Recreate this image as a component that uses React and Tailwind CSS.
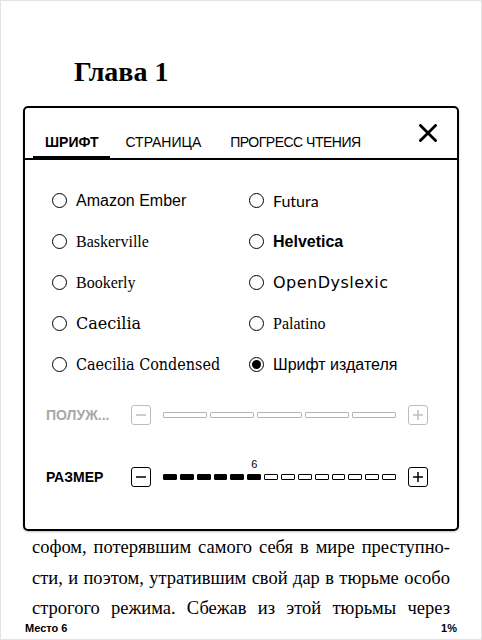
import React from 'react';

const sans = "font-['Liberation_Sans',Arial,sans-serif]";
const serif = "font-['Liberation_Serif','Times_New_Roman',serif]";

const fonts = [
    { label: 'Amazon Ember', cls: sans },
    { label: 'Futura', cls: "font-['Lato',sans-serif]" },
    { label: 'Baskerville', cls: serif },
    { label: 'Helvetica', cls: `${sans} font-bold` },
    { label: 'Bookerly', cls: serif },
    { label: 'OpenDyslexic', cls: "font-['DejaVu_Sans',sans-serif] tracking-[0.5px]" },
    { label: 'Caecilia', cls: "font-['DejaVu_Serif',serif] text-[15px]" },
    { label: 'Palatino', cls: serif },
    { label: 'Caecilia Condensed', cls: "font-['DejaVu_Serif_Condensed','DejaVu_Serif',serif] text-[15px]" },
    { label: 'Шрифт издателя', cls: sans, checked: true },
];

const lines = [
    'софом, потерявшим самого себя в мире преступно-',
    'сти, и поэтом, утратившим свой дар в тюрьме особо',
    'строгого режима. Сбежав из этой тюрьмы через',
];

const StepBox = ({ plus, muted }) => (
    <div
        className={`w-[20px] h-[20px] rounded-[3px] border-[1.5px] flex items-center justify-center ${muted ? 'border-[#bdbdbd]' : 'border-black'}`}
    >
        <svg width="14" height="14" viewBox="0 0 14 14">
            <line x1="2" y1="7" x2="12" y2="7" stroke={muted ? '#bdbdbd' : '#000'} strokeWidth="1.5" />
            {plus && <line x1="7" y1="2" x2="7" y2="12" stroke={muted ? '#bdbdbd' : '#000'} strokeWidth="1.5" />}
        </svg>
    </div>
);

const Radio = ({ checked }) => (
    <div className="w-[15px] h-[15px] rounded-full border-[1.5px] border-black flex items-center justify-center shrink-0">
        {checked && <div className="w-[9px] h-[9px] rounded-full bg-black" />}
    </div>
);

export default function App() {
    const size = 6;

    return (
        <div className={`w-[482px] h-[640px] bg-white border border-[#e3e3e3] flex flex-col text-black ${sans}`}>
            <h1 className={`${serif} font-bold text-[28px] leading-[32px] pl-[73px] mt-[55px]`}>Глава 1</h1>

            <div className="shrink-0 mx-[22px] mt-[18px] h-[425px] border-2 border-black rounded-[5px] shadow-[0_1px_2px_rgba(0,0,0,0.25)] flex flex-col">
                <div className="flex items-end h-[52px] border-b-2 border-black pl-[8px] pr-[20px] text-[14px] leading-[16px]">
                    <div className="px-[12px] pb-[6px] border-b-4 border-black mb-[-2px] font-bold">ШРИФТ</div>
                    <div className="ml-[3px] px-[12px] pb-[8px]">СТРАНИЦА</div>
                    <div className="ml-[5px] px-[12px] pb-[8px] tracking-[-0.5px]">ПРОГРЕСС ЧТЕНИЯ</div>
                    <div className="ml-auto self-start mt-[16px]">
                        <svg width="18" height="18" viewBox="0 0 18 18">
                            <path d="M1.5 1.5 L16.5 16.5 M16.5 1.5 L1.5 16.5" stroke="#000" strokeWidth="2.8" strokeLinecap="square" fill="none" />
                        </svg>
                    </div>
                </div>

                <div className="grid grid-cols-[197px_1fr] pl-[27px] pt-[20px]">
                    {fonts.map((f) => (
                        <div key={f.label} className="h-[41px] flex items-center gap-[9px]">
                            <Radio checked={f.checked} />
                            <span className={`text-[16px] ${f.cls}`}>{f.label}</span>
                        </div>
                    ))}
                </div>

                <div className="flex items-center mt-[19px] pl-[21px] h-[22px]">
                    <span className="w-[85px] font-bold text-[14px] text-[#a8a8a8]">ПОЛУЖ...</span>
                    <StepBox muted />
                    <div className="w-[233px] mx-[12px] flex gap-[3px]">
                        {[0, 1, 2, 3, 4].map((i) => (
                            <div key={i} className="flex-1 h-[6px] border border-[#b5b5b5] rounded-[1px]" />
                        ))}
                    </div>
                    <StepBox plus muted />
                </div>

                <div className="flex items-end mt-[28px] pl-[21px] h-[34px] pb-[1px]">
                    <span className="w-[85px] font-bold text-[14px] leading-[20px]">РАЗМЕР</span>
                    <StepBox />
                    <div className="w-[233px] mx-[12px] flex gap-[3px] mb-[7px]">
                        {Array.from({ length: 14 }).map((_, i) => (
                            <div key={i} className="flex-1 relative">
                                {i === size - 1 && (
                                    <span className="absolute left-1/2 -translate-x-1/2 bottom-[10px] text-[11px] leading-[12px]">{size}</span>
                                )}
                                <div className={`h-[6px] rounded-[1px] border border-black ${i < size ? 'bg-black' : 'bg-white'}`} />
                            </div>
                        ))}
                    </div>
                    <StepBox plus />
                </div>
            </div>

            <div className={`${serif} h-[84px] shrink-0 text-[18.5px] leading-[30.5px] px-[31px] mt-[1px] [word-spacing:-2px]`}>
                {lines.map((l) => (
                    <div key={l} className="text-justify [text-align-last:justify]">{l}</div>
                ))}
            </div>

            <div className="mt-auto flex justify-between px-[24px] pb-[5px] text-[11px] leading-[12px] font-bold">
                <span>Место 6</span>
                <span>1%</span>
            </div>
        </div>
    );
}
